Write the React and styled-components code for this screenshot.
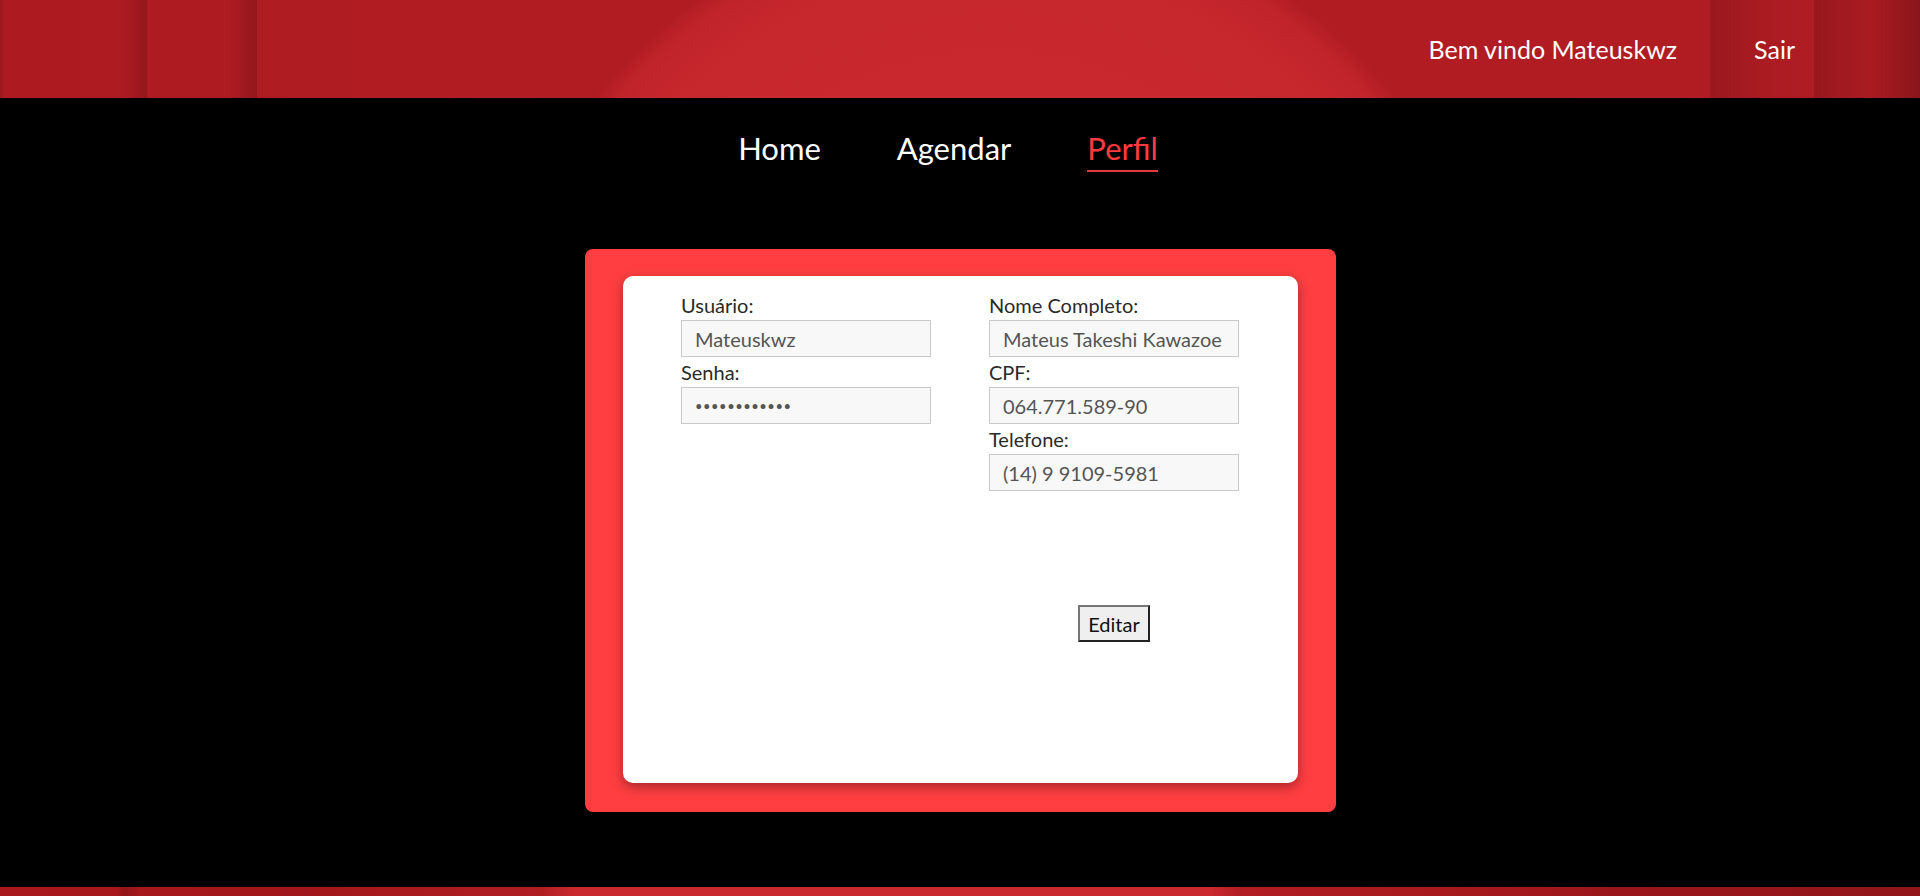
import React from 'react';
import styled, { createGlobalStyle } from 'styled-components';

const GlobalStyle = createGlobalStyle`
  html, body {
    margin: 0;
    padding: 0;
    background: #000;
    overflow: hidden;
  }
  body {
    font-family: 'Lato', 'Noto Sans', sans-serif;
  }
  * { box-sizing: border-box; }
`;

const Page = styled.div`
  height: 100vh;
  display: flex;
  flex-direction: column;
  background: #000;
  overflow: hidden;
`;

const Header = styled.header`
  flex-shrink: 0;
  height: 98px;
  display: flex;
  justify-content: flex-end;
  align-items: center;
  gap: 77px;
  padding-right: 125px;
  background:
    linear-gradient(to right,
      rgba(0,0,0,0.12) 0, transparent 4px,
      transparent 118px, rgba(0,0,0,0.04) 128px, rgba(0,0,0,0.16) 147px, transparent 147px,
      transparent 226px, rgba(0,0,0,0.04) 236px, rgba(0,0,0,0.17) 257px, transparent 257px,
      transparent 1710px, rgba(0,0,0,0.13) 1710px, rgba(0,0,0,0.03) 1765px, transparent 1814px,
      rgba(0,0,0,0.14) 1814px, rgba(0,0,0,0.03) 1870px, rgba(0,0,0,0.22) 1920px),
    radial-gradient(circle at 995px 420px, #cb2b31 0, #c7282e 440px, #c0242a 495px, rgba(192,36,42,0) 515px),
    linear-gradient(to right, #ad1b21 0, #b21d23 50%, #af1c22 100%);
`;

const HeaderLink = styled.a`
  color: #fff;
  font-size: 25px;
  text-decoration: none;
  cursor: pointer;
`;

const Content = styled.main`
  flex-shrink: 0;
  height: 789px;
  display: flex;
  flex-direction: column;
  align-items: center;
`;

const Nav = styled.nav`
  display: flex;
  justify-content: center;
  gap: 76px;
  padding: 31px 24px 0 0;
`;

const NavLink = styled.a`
  font-size: 31px;
  line-height: 38px;
  padding-bottom: 3px;
  color: ${p => (p.$active ? '#ff3b3f' : '#fff')};
  border-bottom: 2px solid ${p => (p.$active ? '#e3393d' : 'transparent')};
  text-decoration: none;
  cursor: pointer;
`;

const Card = styled.section`
  margin-top: 77px;
  width: 751px;
  height: 563px;
  padding: 27px 38px 29px;
  background: #fe3e41;
  border-radius: 8px;
`;

const Panel = styled.div`
  height: 100%;
  background: #fff;
  border-radius: 10px;
  box-shadow: 0 4px 12px rgba(0, 0, 0, 0.35);
  display: grid;
  grid-template-columns: 250px 250px;
  column-gap: 58px;
  justify-content: center;
  align-content: start;
  padding-top: 14px;
`;

const Column = styled.div`
  display: flex;
  flex-direction: column;
`;

const Label = styled.label`
  display: block;
  font-size: 20px;
  line-height: 30px;
  color: #2a2a2a;
`;

const Input = styled.input`
  display: block;
  width: 250px;
  height: 37px;
  padding: 0 13px;
  border: 1px solid #c9c9c9;
  background: #f8f8f8;
  color: #555;
  font-family: inherit;
  font-size: ${p => (p.type === 'password' ? '13px' : '20px')};
  letter-spacing: ${p => (p.type === 'password' ? '0.5px' : 'normal')};
  outline: none;
`;

const ButtonRow = styled.div`
  display: flex;
  justify-content: center;
  margin-top: 114px;
`;

const Button = styled.button`
  height: 37px;
  padding: 0 8px;
  font-family: inherit;
  font-size: 20px;
  color: #111;
  background: #efefef;
  border: 2px solid;
  border-color: #767676 #222 #222 #767676;
  cursor: pointer;
`;

const Footer = styled.footer`
  flex-shrink: 0;
  height: 98px;
  background:
    linear-gradient(to right,
      transparent 0, transparent 118px, rgba(0,0,0,0.12) 124px, transparent 140px,
      transparent 1540px, rgba(0,0,0,0.06) 1700px, rgba(0,0,0,0.12) 1920px),
    linear-gradient(to right, #a9181c 0, #a1161a 300px, #b01e22 540px, #c9292f 575px, #c9292f 1212px, #b11d22 1240px, #9e161a 1600px, #a5181c 1920px);
`;

function Field({ label, ...props }) {
  return (
    <div>
      <Label>{label}</Label>
      <Input readOnly {...props} />
    </div>
  );
}

export default function App() {
  return (
    <>
      <GlobalStyle />
      <Page>
        <Header>
          <HeaderLink>Bem vindo Mateuskwz</HeaderLink>
          <HeaderLink>Sair</HeaderLink>
        </Header>
        <Content>
          <Nav>
            <NavLink>Home</NavLink>
            <NavLink>Agendar</NavLink>
            <NavLink $active>Perfil</NavLink>
          </Nav>
          <Card>
            <Panel>
              <Column>
                <Field label="Usuário:" defaultValue="Mateuskwz" />
                <Field label="Senha:" type="password" defaultValue="mateuskwz123" />
              </Column>
              <Column>
                <Field label="Nome Completo:" defaultValue="Mateus Takeshi Kawazoe" />
                <Field label="CPF:" defaultValue="064.771.589-90" />
                <Field label="Telefone:" defaultValue="(14) 9 9109-5981" />
                <ButtonRow>
                  <Button>Editar</Button>
                </ButtonRow>
              </Column>
            </Panel>
          </Card>
        </Content>
        <Footer />
      </Page>
    </>
  );
}
